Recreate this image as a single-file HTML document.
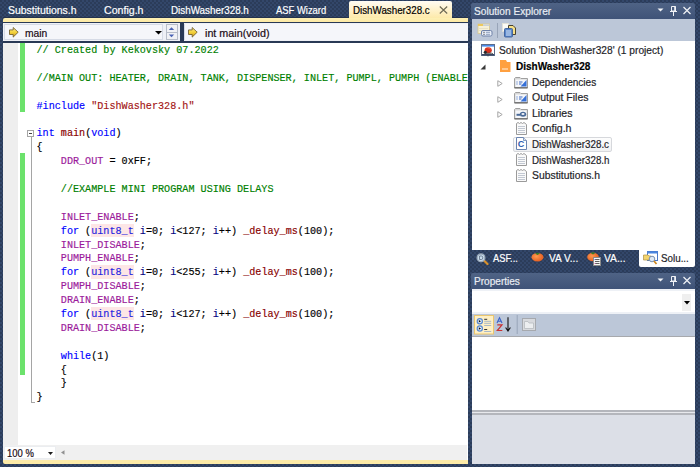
<!DOCTYPE html><html><head><meta charset="utf-8"><style>
html,body{margin:0;padding:0;}
body{width:700px;height:467px;position:relative;overflow:hidden;background:#2c3d5a;font-family:"Liberation Sans",sans-serif;}
.t{position:absolute;white-space:pre;line-height:normal;transform-origin:0 0;-webkit-text-stroke:0.2px currentColor;}
.c{position:absolute;white-space:pre;font-family:"Liberation Mono",monospace;line-height:normal;-webkit-text-stroke:0.15px currentColor;}
.bg{position:absolute;background:radial-gradient(circle at 1px 1px,#283854 0.6px,transparent 1px) 0 0/4px 4px,radial-gradient(circle at 1px 1px,#283854 0.6px,transparent 1px) 2px 2px/4px 4px,#33476a;}
</style></head><body>

<div class="bg" style="left:0;top:0;width:700px;height:467px;"></div>
<div class="t" style="left:8px;top:3.54px;font-size:11px;color:#ffffff;transform:scaleX(0.9494);">Substitutions.h</div>
<div class="t" style="left:103.6px;top:3.54px;font-size:11px;color:#ffffff;transform:scaleX(0.9641);">Config.h</div>
<div class="t" style="left:170.7px;top:3.54px;font-size:11px;color:#ffffff;transform:scaleX(0.8941);">DishWasher328.h</div>
<div class="t" style="left:275.5px;top:3.54px;font-size:11px;color:#ffffff;transform:scaleX(0.8556);">ASF Wizard</div>
<div style="position:absolute;left:3px;top:17px;width:465px;height:1px;background:#24324d;"></div>
<div style="position:absolute;left:349px;top:1px;width:103px;height:18px;background:linear-gradient(#fffcf4,#fff3cf 45%,#fde9a6);border-radius:2px 2px 0 0;"></div>
<div class="t" style="left:353px;top:3.74px;font-size:11px;color:#000;transform:scaleX(0.8877);">DishWasher328.c</div>
<svg style="position:absolute;left:439px;top:6px" width="9" height="8" viewBox="0 0 9 8"><path d="M0.8 0.5L8.2 7.5M8.2 0.5L0.8 7.5" stroke="#6e6a56" stroke-width="1.15"/></svg>
<div style="position:absolute;left:3px;top:18px;width:465px;height:4px;background:linear-gradient(#fdf0b4,#fde9a4);border-radius:2px 0 0 0;"></div>
<div style="position:absolute;left:3px;top:22px;width:465px;height:1px;background:#293955;"></div>
<div style="position:absolute;left:180px;top:23px;width:4px;height:18px;background:#293955;"></div>
<div style="position:absolute;left:3px;top:41px;width:465px;height:2px;background:#293955;"></div>
<div style="position:absolute;left:3px;top:23px;width:177px;height:18px;background:#eef0f6;"></div>
<div style="position:absolute;left:184px;top:23px;width:284px;height:18px;background:#eef0f6;"></div>
<div style="position:absolute;left:4px;top:23.5px;width:159px;height:16px;background:#f5f6fa;border:1px solid #d6dbe6;box-sizing:border-box;"></div>
<div style="position:absolute;left:166px;top:24px;width:12px;height:16px;background:#f0f1f5;border:1px solid #b7bdc9;box-sizing:border-box;"></div>
<div style="position:absolute;left:167px;top:31.5px;width:10px;height:1px;background:#b7bdc9;"></div>
<svg style="position:absolute;left:168px;top:26px" width="8" height="12" viewBox="0 0 8 12"><path d="M0.8 4L3.5 1.2L6.2 4Z" fill="#4a63b5"/><path d="M0.8 8.5L3.5 11.3L6.2 8.5Z" fill="#4a63b5"/></svg>
<svg style="position:absolute;left:155px;top:31px" width="7" height="4" viewBox="0 0 7 4"><path d="M0 0H7L3.5 3.5Z" fill="#000"/></svg>
<div style="position:absolute;left:184px;top:23.5px;width:284px;height:16px;background:#f5f6fa;border-left:1px solid #d6dbe6;box-sizing:border-box;"></div>
<svg style="position:absolute;left:8.8px;top:26.5px" width="10" height="11" viewBox="0 0 10 11"><defs><linearGradient id="ag1" x1="0" y1="0" x2="0" y2="1"><stop offset="0" stop-color="#fbe98a"/><stop offset="0.5" stop-color="#f3d23c"/><stop offset="1" stop-color="#c99a22"/></linearGradient></defs><path d="M0.5 2.9H4.2V0.5L9.2 5.2L4.2 10.1V7.5H0.5Z" fill="url(#ag1)" stroke="#6a5624" stroke-width="0.8"/></svg>
<svg style="position:absolute;left:188.4px;top:26.5px" width="10" height="11" viewBox="0 0 10 11"><defs><linearGradient id="ag2" x1="0" y1="0" x2="0" y2="1"><stop offset="0" stop-color="#fbe98a"/><stop offset="0.5" stop-color="#f3d23c"/><stop offset="1" stop-color="#c99a22"/></linearGradient></defs><path d="M0.5 2.9H4.2V0.5L9.2 5.2L4.2 10.1V7.5H0.5Z" fill="url(#ag2)" stroke="#6a5624" stroke-width="0.8"/></svg>
<div class="t" style="left:24.9px;top:26.99px;font-size:11.5px;color:#1a0a14;transform:scaleX(0.8947);">main</div>
<div class="t" style="left:204.6px;top:26.99px;font-size:11.5px;color:#1a0a14;transform:scaleX(0.9345);">int main(void)</div>
<div style="position:absolute;left:3px;top:43px;width:465px;height:402px;background:#ffffff;"></div>
<div style="position:absolute;left:3px;top:43px;width:15px;height:402px;background:#eeeeee;"></div>
<div style="position:absolute;left:20px;top:43px;width:5px;height:68.5px;background:#6ce26c;"></div>
<div style="position:absolute;left:20px;top:153.1px;width:5px;height:222.3px;background:#6ce26c;"></div>
<div style="position:absolute;left:27px;top:129.5px;width:7px;height:7px;border:1px solid #a5a5a5;box-sizing:border-box;background:#fff;"></div>
<div style="position:absolute;left:29px;top:132.5px;width:3px;height:1px;background:#444;"></div>
<div style="position:absolute;left:31px;top:136.5px;width:1px;height:266.5px;background:#a5a5a5;"></div>
<div style="position:absolute;left:31px;top:402px;width:4px;height:1px;background:#a5a5a5;"></div>
<div style="position:absolute;left:3px;top:42px;width:465px;height:403px;overflow:hidden;">
<div class="c" style="left:33.5px;top:3.07px;font-size:10.13px;"><span style="color:#008000">// Created by Kekovsky 07.2022</span></div>
<div class="c" style="left:33.5px;top:30.85px;font-size:10.13px;"><span style="color:#008000">//MAIN OUT: HEATER, DRAIN, TANK, DISPENSER, INLET, PUMPL, PUMPH (ENABLE/DISABLE)</span></div>
<div class="c" style="left:33.5px;top:58.63px;font-size:10.13px;"><span style="color:#0000ff">#include</span><span style="color:#000000"> </span><span style="color:#a31515">"DishWasher328.h"</span></div>
<div class="c" style="left:33.5px;top:86.41px;font-size:10.13px;"><span style="color:#0000ff">int</span><span style="color:#000000"> </span><span style="color:#880000">main</span><span style="color:#000000">(</span><span style="color:#0000ff">void</span><span style="color:#000000">)</span></div>
<div class="c" style="left:33.5px;top:100.30px;font-size:10.13px;"><span style="color:#000000">{</span></div>
<div class="c" style="left:33.5px;top:114.19px;font-size:10.13px;"><span style="color:#000000">    </span><span style="color:#9b1b9b">DDR_OUT</span><span style="color:#000000"> = 0xFF;</span></div>
<div class="c" style="left:33.5px;top:141.97px;font-size:10.13px;"><span style="color:#000000">    </span><span style="color:#008000">//EXAMPLE MINI PROGRAM USING DELAYS</span></div>
<div class="c" style="left:33.5px;top:169.75px;font-size:10.13px;"><span style="color:#000000">    </span><span style="color:#9b1b9b">INLET_ENABLE</span><span style="color:#000000">;</span></div>
<div class="c" style="left:33.5px;top:183.64px;font-size:10.13px;"><span style="color:#000000">    </span><span style="color:#0000ff">for</span><span style="color:#000000"> (</span><span style="color:#1f1fe0;background:#fde6e6;padding:2px 0 0.5px 0">uint8_t</span><span style="color:#000000"> </span><span style="color:#000080">i</span><span style="color:#000000">=0; </span><span style="color:#000080">i</span><span style="color:#000000">&lt;127; </span><span style="color:#000080">i</span><span style="color:#000000">++) </span><span style="color:#880000">_delay_ms</span><span style="color:#000000">(100);</span></div>
<div class="c" style="left:33.5px;top:197.53px;font-size:10.13px;"><span style="color:#000000">    </span><span style="color:#9b1b9b">INLET_DISABLE</span><span style="color:#000000">;</span></div>
<div class="c" style="left:33.5px;top:211.42px;font-size:10.13px;"><span style="color:#000000">    </span><span style="color:#9b1b9b">PUMPH_ENABLE</span><span style="color:#000000">;</span></div>
<div class="c" style="left:33.5px;top:225.31px;font-size:10.13px;"><span style="color:#000000">    </span><span style="color:#0000ff">for</span><span style="color:#000000"> (</span><span style="color:#1f1fe0;background:#fde6e6;padding:2px 0 0.5px 0">uint8_t</span><span style="color:#000000"> </span><span style="color:#000080">i</span><span style="color:#000000">=0; </span><span style="color:#000080">i</span><span style="color:#000000">&lt;255; </span><span style="color:#000080">i</span><span style="color:#000000">++) </span><span style="color:#880000">_delay_ms</span><span style="color:#000000">(100);</span></div>
<div class="c" style="left:33.5px;top:239.20px;font-size:10.13px;"><span style="color:#000000">    </span><span style="color:#9b1b9b">PUMPH_DISABLE</span><span style="color:#000000">;</span></div>
<div class="c" style="left:33.5px;top:253.09px;font-size:10.13px;"><span style="color:#000000">    </span><span style="color:#9b1b9b">DRAIN_ENABLE</span><span style="color:#000000">;</span></div>
<div class="c" style="left:33.5px;top:266.98px;font-size:10.13px;"><span style="color:#000000">    </span><span style="color:#0000ff">for</span><span style="color:#000000"> (</span><span style="color:#1f1fe0;background:#fde6e6;padding:2px 0 0.5px 0">uint8_t</span><span style="color:#000000"> </span><span style="color:#000080">i</span><span style="color:#000000">=0; </span><span style="color:#000080">i</span><span style="color:#000000">&lt;127; </span><span style="color:#000080">i</span><span style="color:#000000">++) </span><span style="color:#880000">_delay_ms</span><span style="color:#000000">(100);</span></div>
<div class="c" style="left:33.5px;top:280.87px;font-size:10.13px;"><span style="color:#000000">    </span><span style="color:#9b1b9b">DRAIN_DISABLE</span><span style="color:#000000">;</span></div>
<div class="c" style="left:33.5px;top:308.65px;font-size:10.13px;"><span style="color:#000000">    </span><span style="color:#0000ff">while</span><span style="color:#000000">(1)</span></div>
<div class="c" style="left:33.5px;top:322.54px;font-size:10.13px;"><span style="color:#000000">    {</span></div>
<div class="c" style="left:33.5px;top:336.43px;font-size:10.13px;"><span style="color:#000000">    }</span></div>
<div class="c" style="left:33.5px;top:350.32px;font-size:10.13px;"><span style="color:#000000">}</span></div>
</div>
<div style="position:absolute;left:3px;top:445px;width:465px;height:15px;background:#f0f0f0;"></div>
<div style="position:absolute;left:4px;top:446px;width:51.5px;height:13px;background:#ffffff;border:1px solid #ebedf0;box-sizing:border-box;"></div>
<div class="t" style="left:7.4px;top:446.64px;font-size:11px;color:#1a0a14;transform:scaleX(0.8625);">100 %</div>
<svg style="position:absolute;left:48px;top:452px" width="5" height="3" viewBox="0 0 5 3"><path d="M0 0H5L2.5 3Z" fill="#1c1c1c"/></svg>
<svg style="position:absolute;left:60px;top:450px" width="5" height="5" viewBox="0 0 5 5"><path d="M4.5 0.3L1 2.5L4.5 4.7Z" fill="#909090"/></svg>
<div style="position:absolute;left:467px;top:445px;width:1px;height:15px;background:#fff;"></div>
<div style="position:absolute;left:3px;top:460px;width:465px;height:3.5px;background:#fdeba8;border-radius:0 0 0 2px;"></div>
<div style="position:absolute;left:471.2px;top:3px;width:223.5px;height:15.5px;background:linear-gradient(#4f6385,#3f5378);border-radius:2px 2px 0 0;"></div>
<div class="t" style="left:473.6px;top:4.64px;font-size:11px;color:#e9edf3;transform:scaleX(0.9216);">Solution Explorer</div>
<svg style="position:absolute;left:656.5px;top:6px" width="36" height="10" viewBox="0 0 36 10"><path d="M0.5 2.5H6.5L3.5 5.5Z" fill="#f0f2f6"/><path d="M14.5 0.5H18.5V5H14.5Z" stroke="#f0f2f6" stroke-width="1" fill="none"/><path d="M18 0.5V5" stroke="#f0f2f6" stroke-width="1.6"/><path d="M13 5.5H20M16.5 5.5V10" stroke="#f0f2f6" stroke-width="1" fill="none"/><path d="M26.5 1L33.5 8M33.5 1L26.5 8" stroke="#f0f2f6" stroke-width="1.2"/></svg>
<div style="position:absolute;left:471.7px;top:18.5px;width:223px;height:22.5px;background:#bcc7d8;"></div>
<svg style="position:absolute;left:477px;top:22px" width="42" height="17" viewBox="0 0 42 17">
<rect x="1" y="2" width="11.5" height="9.5" fill="#f6f0d6" stroke="#d8c890" stroke-width="0.8"/>
<rect x="1" y="2" width="5" height="2" fill="#ecc85c"/>
<rect x="6" y="2.5" width="6.5" height="1.5" fill="#c8d0dc"/>
<path d="M2 6.5H11M2 8.5H11" stroke="#e2dcc0" stroke-width="0.8"/>
<rect x="4.5" y="8.5" width="10.5" height="5.5" rx="1.5" fill="#e6ecf6" stroke="#6f82a8" stroke-width="1"/>
<path d="M6.5 10.3H7.5M6.5 12.3H7.5" stroke="#222" stroke-width="1"/>
<path d="M9 10.3H13M9 12.3H13" stroke="#8898b8" stroke-width="0.9"/>
<path d="M20.5 1V16" stroke="#98a4b8" stroke-width="1"/>
<rect x="25.5" y="1.5" width="6" height="8" fill="#fbfbf6" stroke="#e4e2d4" stroke-width="0.8"/>
<path d="M31.5 3.5H36L38.5 6V12.5H31.5Z" fill="#f6e08a" stroke="#3a3320" stroke-width="0.9"/>
<rect x="27.5" y="6.5" width="8" height="8.5" rx="1" fill="#5a88cc" stroke="#3c5f98" stroke-width="0.9"/>
<path d="M29 9H34M29 11H34M29 13H34" stroke="#e8f0fa" stroke-width="0.9"/>
</svg>
<div style="position:absolute;left:472px;top:41px;width:222.6px;height:209px;background:#ffffff;"></div>
<div class="t" style="left:499.3px;top:44.34px;font-size:11px;color:#1e1e28;transform:scaleX(0.9260);">Solution 'DishWasher328' (1 project)</div>
<div class="t" style="left:516.4px;top:59.94px;font-size:11px;color:#000;font-weight:bold;transform:scaleX(0.9115);">DishWasher328</div>
<div class="t" style="left:532.4px;top:75.54px;font-size:11px;color:#1e1e28;transform:scaleX(0.9129);">Dependencies</div>
<div class="t" style="left:532.4px;top:91.14px;font-size:11px;color:#1e1e28;transform:scaleX(0.9528);">Output Files</div>
<div class="t" style="left:532.4px;top:106.74px;font-size:11px;color:#1e1e28;transform:scaleX(0.9601);">Libraries</div>
<div class="t" style="left:532.4px;top:122.34px;font-size:11px;color:#1e1e28;transform:scaleX(0.9641);">Config.h</div>
<div class="t" style="left:532.4px;top:153.54px;font-size:11px;color:#1e1e28;transform:scaleX(0.8906);">DishWasher328.h</div>
<div class="t" style="left:532.4px;top:169.14px;font-size:11px;color:#1e1e28;transform:scaleX(0.9424);">Substitutions.h</div>
<svg style="position:absolute;left:481px;top:44px" width="15" height="14" viewBox="0 0 15 14">
<rect x="0.5" y="0.5" width="13" height="11" fill="#fff" stroke="#5c6c8a" stroke-width="1"/>
<rect x="1" y="1" width="12" height="1.6" fill="#4a8ae6"/>
<ellipse cx="7.2" cy="6.3" rx="3.6" ry="3" fill="#d8301c"/>
<path d="M6.5 3.8Q8.5 3.6 9.5 5" stroke="#f08070" stroke-width="0.8" fill="none"/>
<circle cx="4.3" cy="8.3" r="1.6" fill="#2a2a2a"/>
<path d="M5 9.2L10.5 9.2L12 10" stroke="#444" stroke-width="1" fill="none"/>
<rect x="1" y="10" width="12" height="1.5" fill="#3a4660"/>
<path d="M6.5 11.5L7 13L7.5 11.5Z" fill="#222"/>
</svg>
<svg style="position:absolute;left:480px;top:64px" width="6" height="6" viewBox="0 0 6 6"><path d="M5.5 0.5V5.5H0.5Z" fill="#3a3a3a"/></svg>
<svg style="position:absolute;left:500px;top:60px" width="11" height="12" viewBox="0 0 11 12"><path d="M0 0H6L7 2H10.5V12H0Z" fill="#ffa040"/><rect x="2" y="8" width="6" height="2" fill="#ffc890"/></svg>
<svg style="position:absolute;left:497px;top:80.0px" width="6" height="7" viewBox="0 0 6 7"><path d="M0.8 0.7L5.2 3.5L0.8 6.3Z" fill="none" stroke="#a6a6a6" stroke-width="1"/></svg>
<svg style="position:absolute;left:497px;top:95.6px" width="6" height="7" viewBox="0 0 6 7"><path d="M0.8 0.7L5.2 3.5L0.8 6.3Z" fill="none" stroke="#a6a6a6" stroke-width="1"/></svg>
<svg style="position:absolute;left:497px;top:111.2px" width="6" height="7" viewBox="0 0 6 7"><path d="M0.8 0.7L5.2 3.5L0.8 6.3Z" fill="none" stroke="#a6a6a6" stroke-width="1"/></svg>
<svg style="position:absolute;left:513.5px;top:76.5px" width="14" height="12" viewBox="0 0 14 12"><path d="M0.5 11V1.5L1.5 0.5H6L7 1.5H13.5V11Z" fill="#d6d6d6" stroke="#a0a0a0" stroke-width="1"/><rect x="1.5" y="2.5" width="11" height="7.5" fill="#f6f7fa"/><path d="M6.5 9.5L12.5 3V9.5Z" fill="#3670d8"/><path d="M2.5 5H3.5M5 5H8.5M2.5 7H3.5M5 7H7.5" stroke="#3a68c0" stroke-width="1.1"/><path d="M0.5 10.8H13.5" stroke="#5a5a5a" stroke-width="1"/></svg>
<svg style="position:absolute;left:513.5px;top:92.1px" width="14" height="12" viewBox="0 0 14 12"><path d="M0.5 11V1.5L1.5 0.5H6L7 1.5H13.5V11Z" fill="#d6d6d6" stroke="#a0a0a0" stroke-width="1"/><rect x="1.5" y="2.5" width="11" height="7.5" fill="#f6f7fa"/><path d="M6.5 9.5L12.5 3V9.5Z" fill="#3670d8"/><path d="M2.5 5H3.5M5 5H8.5M2.5 7H3.5M5 7H7.5" stroke="#3a68c0" stroke-width="1.1"/><path d="M0.5 10.8H13.5" stroke="#5a5a5a" stroke-width="1"/></svg>
<svg style="position:absolute;left:513.5px;top:107.7px" width="14" height="12" viewBox="0 0 14 12"><path d="M0.5 11V1.5L1.5 0.5H6L7 1.5H13.5V11Z" fill="#d6d6d6" stroke="#a0a0a0" stroke-width="1"/><rect x="1.5" y="2.5" width="11" height="7.5" fill="#f6f7fa"/><ellipse cx="9" cy="6.3" rx="3.2" ry="2.5" fill="#4a6a98"/><ellipse cx="9" cy="6.1" rx="1.6" ry="1" fill="#f4f6fa"/><path d="M2.5 6.8H6" stroke="#4a6a98" stroke-width="2"/><path d="M0.5 10.8H13.5" stroke="#5a5a5a" stroke-width="1"/></svg>
<svg style="position:absolute;left:516px;top:121.8px" width="11" height="13" viewBox="0 0 11 13"><path d="M0.5 1.5L2 0.5L3.5 1.5L5 0.5L6.5 1.5L8 0.5L10.5 2.5V12.5H0.5Z" fill="#fafafa" stroke="#9a9a9a" stroke-width="1"/><path d="M2 4.5H9M2 6.5H9M2 8.5H9M2 10.5H9" stroke="#c2c8d2" stroke-width="1"/></svg>
<div style="position:absolute;left:512.5px;top:136.6px;width:99.5px;height:15.4px;border:1px solid #d6d8dc;border-radius:2px;box-sizing:border-box;background:linear-gradient(#fdfdfd,#f0f1f3);"></div>
<div class="t" style="left:532.4px;top:137.94px;font-size:11px;color:#1e1e28;transform:scaleX(0.8912);">DishWasher328.c</div>
<svg style="position:absolute;left:516px;top:137.4px" width="11" height="13" viewBox="0 0 11 13"><path d="M0.5 0.5H7.5L10.5 3.5V12.5H0.5Z" fill="#fff" stroke="#6a84b0" stroke-width="1"/><path d="M7.5 0.5V3.5H10.5" fill="#dfe6f2" stroke="#6a84b0" stroke-width="0.8"/><text x="1.8" y="10.3" font-family="Liberation Sans" font-weight="bold" font-size="9" fill="#2a5cb0">C</text></svg>
<svg style="position:absolute;left:516px;top:153.0px" width="11" height="13" viewBox="0 0 11 13"><path d="M0.5 1.5L2 0.5L3.5 1.5L5 0.5L6.5 1.5L8 0.5L10.5 2.5V12.5H0.5Z" fill="#fafafa" stroke="#9a9a9a" stroke-width="1"/><path d="M2 4.5H9M2 6.5H9M2 8.5H9M2 10.5H9" stroke="#c2c8d2" stroke-width="1"/></svg>
<svg style="position:absolute;left:516px;top:168.6px" width="11" height="13" viewBox="0 0 11 13"><path d="M0.5 1.5L2 0.5L3.5 1.5L5 0.5L6.5 1.5L8 0.5L10.5 2.5V12.5H0.5Z" fill="#fafafa" stroke="#9a9a9a" stroke-width="1"/><path d="M2 4.5H9M2 6.5H9M2 8.5H9M2 10.5H9" stroke="#c2c8d2" stroke-width="1"/></svg>
<div style="position:absolute;left:639px;top:250px;width:56px;height:16.6px;background:#ffffff;border-radius:0 0 2px 2px;"></div>
<div class="t" style="left:493.3px;top:252.34px;font-size:11px;color:#ffffff;transform:scaleX(0.8486);">ASF...</div>
<div class="t" style="left:549px;top:252.34px;font-size:11px;color:#ffffff;transform:scaleX(0.9181);">VA V...</div>
<div class="t" style="left:604px;top:252.34px;font-size:11px;color:#ffffff;transform:scaleX(0.9336);">VA...</div>
<div class="t" style="left:660.6px;top:252.34px;font-size:11px;color:#1e1e28;transform:scaleX(0.8915);">Solu...</div>
<svg style="position:absolute;left:476px;top:253px" width="14" height="12" viewBox="0 0 14 12"><path d="M7.5 7L11.5 11" stroke="#d8902a" stroke-width="2.2" stroke-linecap="round"/><circle cx="5" cy="4.8" r="3.9" fill="#c8dcec" stroke="#9aa8b8" stroke-width="1.3"/><path d="M3.5 3V6.5H5.5Q6.8 6.5 6.8 4.8Q6.8 3 5.5 3Z" fill="none" stroke="#5a6a80" stroke-width="0.8"/></svg>
<svg style="position:absolute;left:531px;top:252px" width="14" height="10" viewBox="0 0 14 10"><defs><radialGradient id="tom1" cx="0.4" cy="0.4" r="0.7"><stop offset="0" stop-color="#ff9a50"/><stop offset="1" stop-color="#e0561a"/></radialGradient></defs><ellipse cx="6.5" cy="5.3" rx="6" ry="4.2" fill="url(#tom1)"/><path d="M4 1.5Q6.5 0 9 1.5L6.5 3Z" fill="#3a7a28"/></svg>
<svg style="position:absolute;left:587px;top:251px" width="15" height="15" viewBox="0 0 15 15"><defs><radialGradient id="tom2" cx="0.4" cy="0.4" r="0.7"><stop offset="0" stop-color="#ff9a50"/><stop offset="1" stop-color="#e0561a"/></radialGradient></defs><ellipse cx="6" cy="6" rx="5.8" ry="4.3" fill="url(#tom2)"/><path d="M3.5 2Q6 0.5 8.5 2L6 3.5Z" fill="#3a7a28"/><rect x="6.5" y="6.5" width="7" height="8" fill="#f4f4f4" stroke="#8a8a8a" stroke-width="1"/><path d="M8 8.5H12.5M8 10.5H12.5M8 12.5H12.5" stroke="#505050" stroke-width="0.9"/><path d="M7.5 8.5H8.5" stroke="#6a5ae0" stroke-width="0.9"/><path d="M7.5 12.5H8.5" stroke="#e05ab0" stroke-width="0.9"/></svg>
<svg style="position:absolute;left:643px;top:251px" width="16" height="14" viewBox="0 0 16 14"><rect x="4.5" y="0.5" width="10" height="9" fill="#fff" stroke="#4a78c8" stroke-width="1"/><rect x="4.5" y="0.5" width="10" height="2" fill="#4a86e0"/><path d="M0.5 4H5L6 5H8V9H0.5Z" fill="#f2d46e" stroke="#b09040" stroke-width="0.7"/><circle cx="9" cy="8" r="2.8" fill="#dfe9f5" stroke="#7890b0" stroke-width="1"/><path d="M11 10L13.5 13" stroke="#d08a20" stroke-width="1.8"/></svg>
<div style="position:absolute;left:471.2px;top:272.6px;width:223.5px;height:16px;background:linear-gradient(#4f6385,#3f5378);border-radius:2px 2px 0 0;"></div>
<div class="t" style="left:473.6px;top:275.04px;font-size:11px;color:#e9edf3;transform:scaleX(0.9156);">Properties</div>
<svg style="position:absolute;left:656.5px;top:275.5px" width="36" height="10" viewBox="0 0 36 10"><path d="M0.5 2.5H6.5L3.5 5.5Z" fill="#f0f2f6"/><path d="M14.5 0.5H18.5V5H14.5Z" stroke="#f0f2f6" stroke-width="1" fill="none"/><path d="M18 0.5V5" stroke="#f0f2f6" stroke-width="1.6"/><path d="M13 5.5H20M16.5 5.5V10" stroke="#f0f2f6" stroke-width="1" fill="none"/><path d="M26.5 1L33.5 8M33.5 1L26.5 8" stroke="#f0f2f6" stroke-width="1.2"/></svg>
<div style="position:absolute;left:471.5px;top:288.5px;width:223.2px;height:26px;background:#eef1f6;"></div>
<div style="position:absolute;left:472px;top:290.8px;width:222.5px;height:21.2px;background:#ffffff;"></div>
<div style="position:absolute;left:682.3px;top:294px;width:8.6px;height:16.7px;background:#efefef;"></div>
<svg style="position:absolute;left:684px;top:301px" width="6" height="4" viewBox="0 0 6 4"><path d="M0 0H6L3 3.5Z" fill="#000"/></svg>
<div style="position:absolute;left:471.5px;top:314px;width:223.2px;height:22px;background:#bcc7d8;"></div>
<div style="position:absolute;left:471.5px;top:335.7px;width:223.2px;height:1.3px;background:#a7a9ad;"></div>
<svg style="position:absolute;left:472px;top:312px" width="68" height="26" viewBox="0 0 68 26">
<rect x="2.5" y="3.5" width="19" height="18.5" fill="#fff0c4" stroke="#eac66e" stroke-width="1"/>
<circle cx="7.8" cy="9.2" r="2.6" fill="#e6f0fa" stroke="#5a8ad0" stroke-width="1.2"/><path d="M6.8 8L9 9.2L6.8 10.4Z" fill="#111"/>
<circle cx="7.8" cy="16.5" r="2.6" fill="#e6f0fa" stroke="#5a8ad0" stroke-width="1.2"/><path d="M6.8 15.3L9 16.5L6.8 17.7Z" fill="#111"/>
<path d="M12.2 7.3H15.2M12.2 17.5H15.2" stroke="#333" stroke-width="1"/>
<path d="M12.2 9.3H19.2M12.2 11.3H19.2M12.2 13.5H19.2M12.2 19.5H19.2" stroke="#a8b8c8" stroke-width="1"/>
<path d="M25 11L27.5 5.8L30 11M26 9.2H29" stroke="#3a62c8" stroke-width="1.1" fill="none"/>
<path d="M25.3 12.8H30L25.3 18.5H30.3" stroke="#c83232" stroke-width="1.2" fill="none"/>
<path d="M36 5.3V18.5M33.6 15.5L36 19L38.4 15.5" stroke="#111" stroke-width="1.1" fill="none"/>
<path d="M45.2 3V22" stroke="#98a4b8" stroke-width="1"/>
<rect x="50.5" y="6.5" width="13" height="12" fill="#d8dade" stroke="#a6a9ae" stroke-width="1"/>
<path d="M52.5 9.5H56L57 11H61.5V16.5H52.5Z" fill="#eceef0" stroke="#b8bbc0" stroke-width="0.8"/>
</svg>
<div style="position:absolute;left:471.5px;top:337px;width:223.2px;height:72.8px;background:#ffffff;"></div>
<div style="position:absolute;left:471.5px;top:409.8px;width:223.2px;height:2.2px;background:#b4b6bc;"></div>
<div style="position:absolute;left:471.5px;top:412px;width:223.2px;height:1.4px;background:#e8e9ed;"></div>
<div style="position:absolute;left:471.5px;top:413.4px;width:223.2px;height:1.6px;background:#b4b6bc;"></div>
<div style="position:absolute;left:471.5px;top:415px;width:223.2px;height:49px;background:#dcdfe7;"></div>
</body></html>
